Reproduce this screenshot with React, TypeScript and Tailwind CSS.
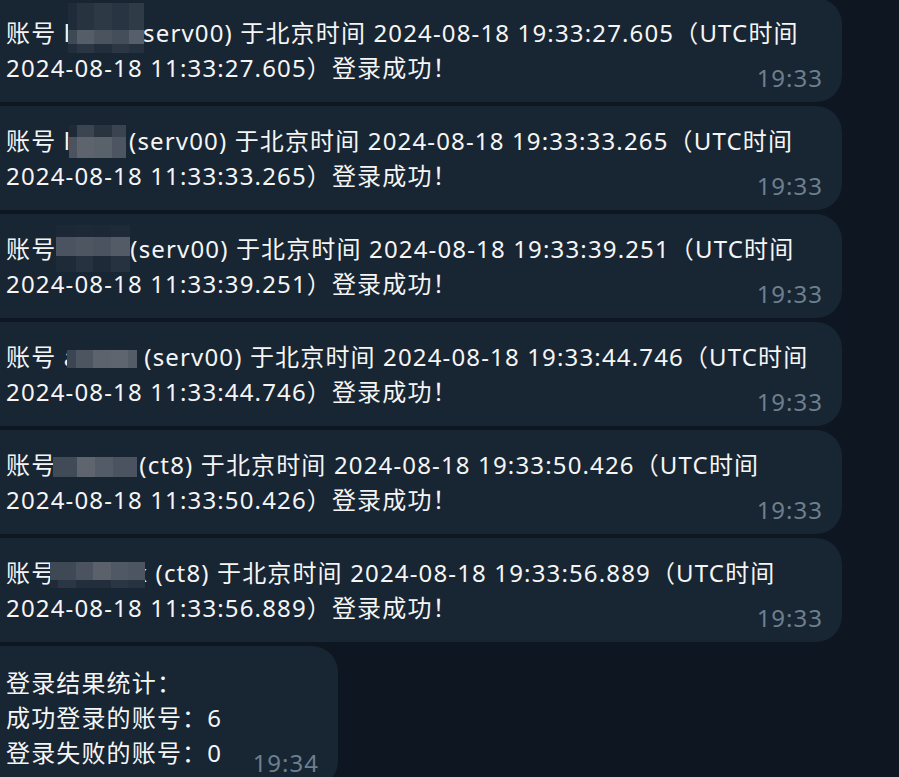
type Cell = { w: number; c: string };

type MosaicProps = {
  gap: number; // room the hidden text takes in the line
  left: number; // where the blur starts, from the gap's start
  top: number; // from the line box top
  h: number[];
  rows: Cell[][];
};

// pixelated blur laid over the hidden part of the name
function Mosaic({ gap, left, top, h, rows }: MosaicProps) {
  return (
    <span className="relative inline-block h-[35px] align-top" style={{ width: gap }}>
      <span className="absolute flex flex-col" style={{ left, top }}>
        {rows.map((row, i) => (
          <span key={i} className="flex" style={{ height: h[i] }}>
            {row.map((cell, j) => (
              <span key={j} className="block h-full" style={{ width: cell.w, background: cell.c }} />
            ))}
          </span>
        ))}
      </span>
    </span>
  );
}

type Msg = {
  pre: string;
  mosaic: MosaicProps;
  post: string;
  line2: string;
};

const msgs: Msg[] = [
  {
    pre: "账号 l",
    mosaic: {
      gap: 72,
      left: -3,
      top: -12,
      h: [27, 14, 9],
      rows: [
        [
          { w: 9, c: "#1f2b39" },
          { w: 17, c: "#27333f" },
          { w: 18, c: "#2e3946" },
          { w: 17, c: "#283441" },
          { w: 15, c: "#303b48" },
        ],
        [
          { w: 9, c: "#3f4955" },
          { w: 17, c: "#545d68" },
          { w: 18, c: "#4a535e" },
          { w: 17, c: "#444e5a" },
          { w: 15, c: "#555e6a" },
        ],
        [
          { w: 9, c: "#222e3c" },
          { w: 17, c: "#2a3644" },
          { w: 18, c: "#222e3b" },
          { w: 17, c: "#2b3745" },
          { w: 15, c: "#25313e" },
        ],
      ],
    },
    post: "serv00) 于北京时间 2024-08-18 19:33:27.605（UTC时间",
    line2: "2024-08-18 11:33:27.605）登录成功！",
  },
  {
    pre: "账号 l",
    mosaic: {
      gap: 58,
      left: -2,
      top: 2,
      h: [12, 21],
      rows: [
        [
          { w: 8, c: "#1e2a38" },
          { w: 17, c: "#3b4551" },
          { w: 18, c: "#29343f" },
          { w: 14, c: "#3a444f" },
        ],
        [
          { w: 8, c: "#4a535e" },
          { w: 17, c: "#5d646e" },
          { w: 18, c: "#59616b" },
          { w: 14, c: "#4c5560" },
        ],
      ],
    },
    post: "(serv00) 于北京时间 2024-08-18 19:33:33.265（UTC时间",
    line2: "2024-08-18 11:33:33.265）登录成功！",
  },
  {
    pre: "账号",
    mosaic: {
      gap: 74,
      left: 0,
      top: -6,
      h: [12, 19, 16],
      rows: [
        [
          { w: 20, c: "#1c2836" },
          { w: 17, c: "#1d2937" },
          { w: 18, c: "#1c2836" },
          { w: 19, c: "#1e2a38" },
        ],
        [
          { w: 20, c: "#4a535f" },
          { w: 17, c: "#4d5661" },
          { w: 18, c: "#4a535f" },
          { w: 19, c: "#525b66" },
        ],
        [
          { w: 20, c: "#1e2a38" },
          { w: 17, c: "#26323f" },
          { w: 18, c: "#1e2a38" },
          { w: 19, c: "#26323f" },
        ],
      ],
    },
    post: "(serv00) 于北京时间 2024-08-18 19:33:39.251（UTC时间",
    line2: "2024-08-18 11:33:39.251）登录成功！",
  },
  {
    pre: "账号 a",
    mosaic: {
      gap: 46,
      left: -11,
      top: 11,
      h: [18],
      rows: [
        [
          { w: 9, c: "#3b4652" },
          { w: 17, c: "#4c5560" },
          { w: 18, c: "#5c636d" },
          { w: 17, c: "#5e656f" },
          { w: 9, c: "#545c67" },
        ],
      ],
    },
    post: "s (serv00) 于北京时间 2024-08-18 19:33:44.746（UTC时间",
    line2: "2024-08-18 11:33:44.746）登录成功！",
  },
  {
    pre: "账号",
    mosaic: {
      gap: 83,
      left: -3,
      top: 10,
      h: [20],
      rows: [
        [
          { w: 24, c: "#414b57" },
          { w: 18, c: "#5e656f" },
          { w: 18, c: "#535b66" },
          { w: 24, c: "#4a535f" },
        ],
      ],
    },
    post: "(ct8) 于北京时间 2024-08-18 19:33:50.426（UTC时间",
    line2: "2024-08-18 11:33:50.426）登录成功！",
  },
  {
    pre: "账号",
    mosaic: {
      gap: 78,
      left: -6,
      top: 7,
      h: [18, 8],
      rows: [
        [
          { w: 26, c: "#3f4955" },
          { w: 17, c: "#4a535f" },
          { w: 18, c: "#5a616b" },
          { w: 17, c: "#4f5863" },
          { w: 17, c: "#4c5560" },
        ],
        [
          { w: 8, c: "#1f2b38" },
          { w: 18, c: "#2a3643" },
          { w: 35, c: "#222e3b" },
          { w: 17, c: "#2a3643" },
          { w: 17, c: "#26323f" },
        ],
      ],
    },
    post: "x (ct8) 于北京时间 2024-08-18 19:33:56.889（UTC时间",
    line2: "2024-08-18 11:33:56.889）登录成功！",
  },
];

const font = "font-['Noto_Sans','Noto_Sans_CJK_SC',sans-serif]";

export default function App() {
  return (
    <div
      className={`h-[777px] w-[899px] overflow-hidden bg-[#0e1621] ${font} text-[24px] tracking-[1.15px] text-[#f5f5f5]`}
    >
      <div className="mt-[-2px] flex flex-col gap-[4px]">
        {msgs.map((m, i) => (
          <div
            key={i}
            className="flex h-[104px] w-[842px] flex-col rounded-r-[26px] bg-[#182533] pl-[6px] pr-[19px] pt-[17px] pb-[7px]"
          >
            <div className="whitespace-nowrap leading-[35px]">
              <div>
                {m.pre}
                <Mosaic {...m.mosaic} />
                {m.post}
              </div>
              <div>{m.line2}</div>
            </div>
            <div className="mt-[-25px] self-end leading-[35px] tracking-[1px] text-[#6d7f8f]">
              19:33
            </div>
          </div>
        ))}
        <div className="flex w-[338px] flex-col rounded-r-[26px] bg-[#182533] pl-[6px] pr-[19px] pt-[19px] pb-[7px]">
          <div className="whitespace-nowrap leading-[35px]">
            <div>登录结果统计：</div>
            <div>成功登录的账号：6</div>
            <div>登录失败的账号：0</div>
          </div>
          <div className="mt-[-25px] self-end leading-[35px] tracking-[1px] text-[#6d7f8f]">
            19:34
          </div>
        </div>
      </div>
    </div>
  );
}
